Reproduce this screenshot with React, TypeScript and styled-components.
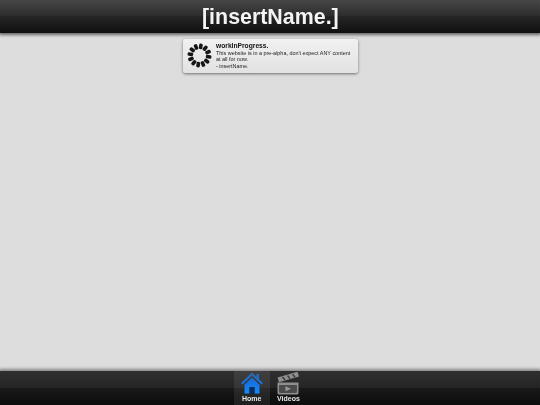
import * as React from "react";
import styled, { createGlobalStyle } from "styled-components";

const GlobalStyle = createGlobalStyle`
  html, body {
    margin: 0;
    padding: 0;
    height: 100%;
    overflow: hidden;
    font-family: "Liberation Sans", Arial, sans-serif;
  }
  #root {
    height: 100%;
  }
`;

const Page = styled.div`
  display: flex;
  flex-direction: column;
  height: 405px;
  background: #dddddd;
`;

const Header = styled.header`
  position: relative;
  z-index: 1;
  height: 33px;
  flex-shrink: 0;
  display: flex;
  justify-content: center;
  background:
    repeating-linear-gradient(90deg, rgba(0, 0, 0, 0.04) 0 1px, transparent 1px 2px),
    linear-gradient(#484848 0, #2e2e2e 48%, #262626 50%, #101010 100%);
  box-shadow: 0 1px 3px 1px rgba(0, 0, 0, 0.55);
`;

const Title = styled.h1`
  margin: 1px 0 0;
  color: #f4f4f4;
  font-size: 21.4px;
  font-weight: bold;
  line-height: 33px;
  will-change: transform;
`;

const Content = styled.main`
  flex: 1;
  display: flex;
  justify-content: center;
  align-items: flex-start;
  padding-top: 6px;
`;

const Card = styled.section`
  width: 175px;
  height: 34px;
  display: flex;
  align-items: flex-start;
  border-radius: 3px;
  background: linear-gradient(#f1f1f1, #e2e2e2);
  box-shadow: 0 1px 3px rgba(0, 0, 0, 0.5);
`;

const SpinnerBox = styled.div`
  width: 33px;
  height: 32px;
  flex-shrink: 0;
  display: flex;
  align-items: center;
  justify-content: center;
`;

const CardText = styled.div`
  padding-top: 3px;
  width: 136px;
  will-change: transform;
`;

const CardTitle = styled.h2`
  margin: 0;
  font-size: 6.7px;
  line-height: 8px;
  font-weight: bold;
  color: #111;
`;

const CardLine = styled.p`
  margin: 0;
  font-size: 5.45px;
  line-height: 6.4px;
  color: #222;
`;

const Footer = styled.footer`
  position: relative;
  z-index: 1;
  height: 34px;
  flex-shrink: 0;
  display: flex;
  justify-content: center;
  background:
    repeating-linear-gradient(90deg, rgba(0, 0, 0, 0.04) 0 1px, transparent 1px 2px),
    linear-gradient(#303030 0, #262626 48%, #1a1a1a 50%, #0c0c0c 100%);
  box-shadow: 0 -1px 3px 1px rgba(0, 0, 0, 0.4);
`;

const Tab = styled.div<{ $active?: boolean }>`
  width: 36px;
  display: flex;
  flex-direction: column;
  align-items: center;
  justify-content: flex-end;
  padding-bottom: 2px;
  box-sizing: border-box;
  background: ${(p) => (p.$active ? "rgba(255,255,255,0.08)" : "transparent")};
`;

const TabIcon = styled.svg`
  display: block;
  width: 24px;
  height: 24px;
`;

const TabLabel = styled.span`
  color: #e8e8e8;
  font-size: 7px;
  font-weight: bold;
  line-height: 8px;
  will-change: transform;
`;

const Spinner = () => (
  <svg width="25" height="25" viewBox="0 0 25 25">
    {Array.from({ length: 12 }).map((_, i) => (
      <rect
        key={i}
        x="10.7"
        y="0.5"
        width="3.6"
        height="5.6"
        rx="1.3"
        fill="#161616"
        transform={`rotate(${i * 30 + 8} 12.5 12.5)`}
      />
    ))}
  </svg>
);

const HomeIcon = () => (
  <TabIcon viewBox="0 0 24 24">
    <defs>
      <linearGradient id="homeBlue" x1="0" y1="0" x2="0" y2="1">
        <stop offset="0" stopColor="#2c68a8" />
        <stop offset="0.45" stopColor="#1670e0" />
        <stop offset="1" stopColor="#118cff" />
      </linearGradient>
    </defs>
    <path
      d="M12 1.5 L16.5 5.8 V3 H19 V8.2 L23 12 L21.5 13.5 L12 4.5 L2.5 13.5 L1 12 Z M4.5 13.8 L12 6.6 L19.5 13.8 V22.5 H14.5 V16 H9.5 V22.5 H4.5 Z"
      fill="url(#homeBlue)"
    />
    <rect x="9.5" y="16" width="5" height="6.5" fill="#0c2c5c" />
  </TabIcon>
);

const VideoIcon = () => (
  <TabIcon viewBox="0 0 24 24">
    <path d="M1.5 6.4 L21.5 0.8 L23 5.6 L3 11.2 Z" fill="#8e8e8e" />
    <path d="M6.5 6 L9 9 M11.5 4.5 L14 7.6 M16.5 3.1 L19 6.2" stroke="#3c3c3c" strokeWidth="1.5" />
    <path
      fillRule="evenodd"
      d="M1.5 11.5 H22.5 V22 Q22.5 23.5 21 23.5 H3 Q1.5 23.5 1.5 22 Z M3.5 14 V21.5 H20.5 V14 Z"
      fill="#8e8e8e"
    />
    <rect x="3.5" y="14" width="17" height="7.5" fill="#4a4a4a" />
    <path d="M9.5 15.2 L15 17.8 L9.5 20.3 Z" fill="#9a9a9a" />
  </TabIcon>
);

export default function App() {
  return (
    <Page>
      <GlobalStyle />
      <Header>
        <Title>[insertName.]</Title>
      </Header>
      <Content>
        <Card>
          <SpinnerBox>
            <Spinner />
          </SpinnerBox>
          <CardText>
            <CardTitle>workInProgress.</CardTitle>
            <CardLine>This website is in a pre-alpha, don't expect ANY content at all for now.</CardLine>
            <CardLine>- insertName.</CardLine>
          </CardText>
        </Card>
      </Content>
      <Footer>
        <Tab $active>
          <HomeIcon />
          <TabLabel>Home</TabLabel>
        </Tab>
        <Tab>
          <VideoIcon />
          <TabLabel>Videos</TabLabel>
        </Tab>
      </Footer>
    </Page>
  );
}
